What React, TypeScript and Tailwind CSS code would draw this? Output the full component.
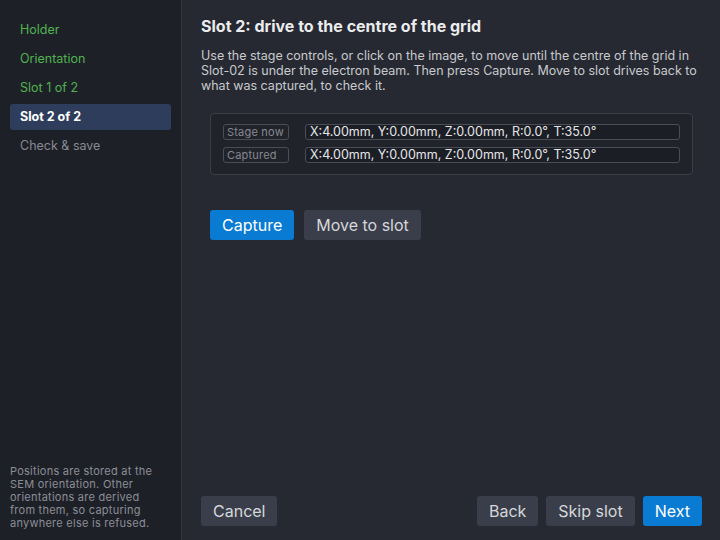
import React from "react";

const font = { fontFamily: "Inter, 'Noto Sans', 'Liberation Sans', sans-serif" };

export default function App() {
  const steps = [
    { label: "Holder", state: "done" },
    { label: "Orientation", state: "done" },
    { label: "Slot 1 of 2", state: "done" },
    { label: "Slot 2 of 2", state: "active" },
    { label: "Check & save", state: "todo" },
  ];
  const value = "X:4.00mm, Y:0.00mm, Z:0.00mm, R:0.0°, T:35.0°";
  return (
    <div className="flex w-[720px] h-[540px] bg-[#262932] overflow-hidden" style={font}>
      <div className="w-[182px] shrink-0 bg-[#1e2028] border-r border-[#34373f] flex flex-col justify-between px-[10px] pt-[17px] pb-[10px]">
        <div className="flex flex-col gap-[3px]">
          {steps.map((s) => (
            <div
              key={s.label}
              className={
                "h-[26px] flex items-center px-[10px] rounded-[3px] text-[12.5px] " +
                (s.state === "active"
                  ? "bg-[#2e3d5c] text-white font-bold"
                  : s.state === "done"
                  ? "text-[#4fb34f]"
                  : "text-[#878a92]")
              }
            >
              {s.label}
            </div>
          ))}
        </div>
        <div className="w-[152px] text-[11px] tracking-[0.25px] leading-[13px] text-[#8b8e96]">
          Positions are stored at the SEM orientation. Other orientations are derived from them, so capturing anywhere else is refused.
        </div>
      </div>
      <div className="flex-1 flex flex-col justify-between pl-[19px] pr-[18px] pt-[16px] pb-[14px]">
        <div className="flex flex-col">
          <h1 className="text-[16px] font-bold text-[#ececee] leading-[20px]">
            Slot 2: drive to the centre of the grid
          </h1>
          <p className="mt-[12px] text-[12.5px] leading-[15px] text-[#c9cacd]">
            Use the stage controls, or click on the image, to move until the centre of the grid in Slot-02 is under the electron beam. Then press Capture. Move to slot drives back to what was captured, to check it.
          </p>
          <div className="mt-[20px] ml-[9px] mr-[9px] rounded-[4px] border border-[#3a3d46] bg-[#21232b] px-[12px] pt-[10px] pb-[11px] flex flex-col gap-[7px]">
            {["Stage now", "Captured"].map((l) => (
              <div key={l} className="flex items-center gap-[16px]">
                <div className="w-[66px] h-[16px] shrink-0 whitespace-nowrap overflow-hidden rounded-[3px] border border-[#4a4d56] text-[11px] tracking-[0.2px] text-[#85888f] flex items-center px-[3px] leading-none">
                  {l}
                </div>
                <div className="flex-1 h-[16px] whitespace-nowrap rounded-[3px] border border-[#4a4d56] bg-[#1c1e25] text-[12.5px] text-[#e6e6e8] flex items-center px-[4px] leading-none">
                  {value}
                </div>
              </div>
            ))}
          </div>
          <div className="mt-[35px] ml-[9px] flex gap-[10px]">
            <button className="h-[30px] px-[12px] rounded-[3px] bg-[#0a7bd2] text-white text-[16px]">Capture</button>
            <button className="h-[30px] px-[12px] rounded-[3px] bg-[#3a3e4a] text-[#d6d7da] text-[16px]">Move to slot</button>
          </div>
        </div>
        <div className="flex items-center justify-between">
          <button className="h-[30px] px-[12px] rounded-[3px] bg-[#3a3e4a] text-[#d6d7da] text-[16px]">Cancel</button>
          <div className="flex gap-[8px]">
            <button className="h-[30px] px-[12px] rounded-[3px] bg-[#3a3e4a] text-[#d6d7da] text-[16px]">Back</button>
            <button className="h-[30px] px-[12px] rounded-[3px] bg-[#3a3e4a] text-[#d6d7da] text-[16px]">Skip slot</button>
            <button className="h-[30px] px-[12px] rounded-[3px] bg-[#0a7bd2] text-white text-[16px]">Next</button>
          </div>
        </div>
      </div>
    </div>
  );
}
